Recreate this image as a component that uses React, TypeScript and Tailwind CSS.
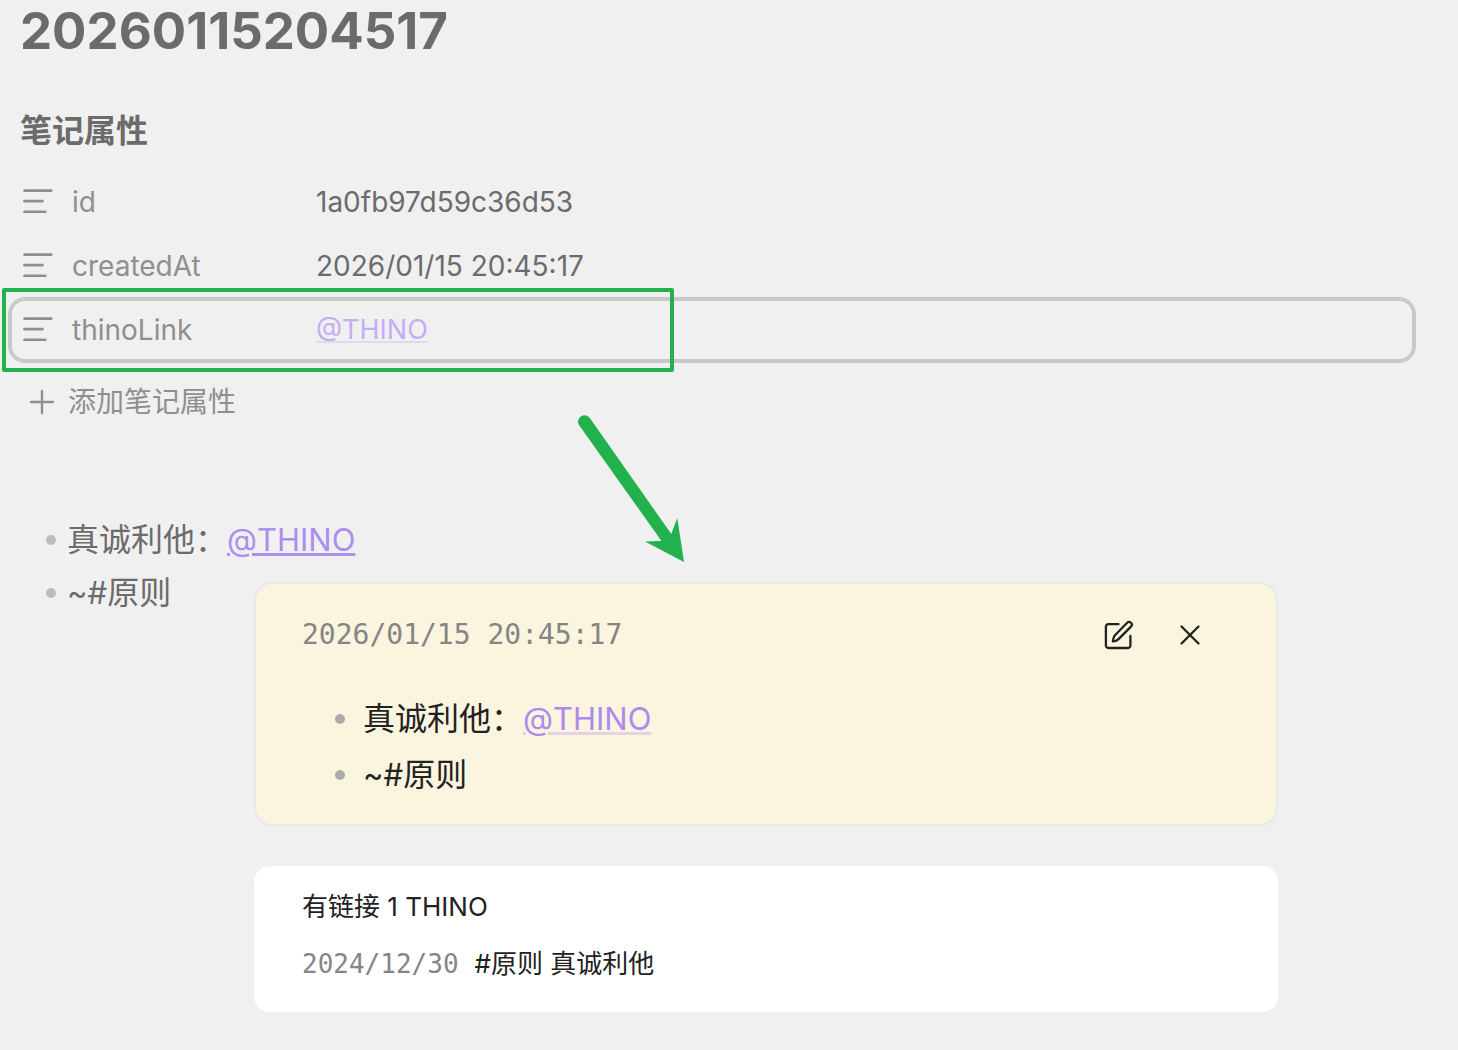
import React from "react";
import { X } from "lucide-react";

const sans = "font-['Inter','Noto_Sans_CJK_SC',sans-serif]";
const mono = "font-['DejaVu_Sans_Mono','Noto_Sans_CJK_SC',monospace]";

function TextIcon() {
  return (
    <svg
      className="size-8 shrink-0"
      viewBox="0 0 32 32"
      fill="none"
      stroke="currentColor"
      strokeWidth="2.6"
      strokeLinecap="round"
      aria-hidden="true"
    >
      <path d="M3.400 4.600H30.400M3.400 15.100H21.500M3.400 25.700H24.300" />
    </svg>
  );
}

function PlusIcon() {
  return (
    <svg
      className="size-7"
      viewBox="0 0 28 28"
      fill="none"
      stroke="currentColor"
      strokeWidth="2.4"
      strokeLinecap="round"
      aria-hidden="true"
    >
      <path d="M14 3V25M3 14H25" />
    </svg>
  );
}

function EditIcon() {
  return (
    <svg
      className="size-8"
      viewBox="8 7 32 32"
      fill="none"
      stroke="currentColor"
      strokeWidth="2.3"
      strokeLinecap="round"
      strokeLinejoin="round"
      aria-hidden="true"
    >
      <path d="M24.500 12.200H14.300A2.400 2.400 0 0 0 11.900 14.600V33.600A2.400 2.400 0 0 0 14.300 36H34A2.400 2.400 0 0 0 36.400 33.600V24" />
      <path d="M33.200 10.800A2.600 2.600 0 0 1 37 14.600L24.500 27.100Q23.300 28.300 21.700 28.800L18.900 29.400L19.500 26.200Q19.900 24.300 21.200 23Z" />
    </svg>
  );
}

function Arrow() {
  return (
    <svg
      className="absolute left-[560px] top-[400px] h-[180px] w-[140px]"
      viewBox="0 0 140 180"
      fill="#22b14c"
      aria-hidden="true"
    >
      <path d="M30 18.3A5.8 5.8 0 0 0 19 25L101.500 141L85 141.500L124 162L117.300 118L111.300 134Z" />
    </svg>
  );
}

function Bullet({ tone }: { tone: string }) {
  return <span className={`size-[10px] shrink-0 rounded-full ${tone}`} />;
}

function PropertyInput({ name, value }: { name: string; value: string }) {
  return (
    <div className="flex h-16 items-center pl-3">
      <label htmlFor={name} className="flex w-[295px] shrink-0 items-center gap-[19px] text-[#8f8f8f]">
        <TextIcon />
        {name}
      </label>
      <input
        id={name}
        type="text"
        defaultValue={value}
        className="min-w-0 flex-1 bg-transparent text-[#6b6b6b] outline-none"
      />
    </div>
  );
}

export default function App() {
  return (
    <div className={`relative min-h-screen overflow-hidden bg-[#f0f0f0] text-[28px] leading-8 ${sans}`}>
      <h1 className="px-5 text-[51px] font-bold leading-[62px] text-[#6b6b6b]">20260115204517</h1>

      <section className="ml-[9px] mr-[43px] mt-[46px]">
        <h2 className="px-[11px] text-[32px] font-semibold leading-[46px] text-[#6b6b6b]">笔记属性</h2>
        <div className="mt-4">
          <PropertyInput name="id" value="1a0fb97d59c36d53" />
          <PropertyInput name="createdAt" value="2026/01/15 20:45:17" />
          <div className="relative flex h-16 items-center rounded-2xl border-[3px] border-[#c8c8c8] pl-[9px] ring-1 ring-[#c8c8c8]">
            <span className="flex w-[295px] shrink-0 items-center gap-[19px] text-[#8f8f8f]">
              <TextIcon />
              thinoLink
            </span>
            <a
              href="#thino"
              className="text-[27px] text-[#c4adf2] underline decoration-[#dfdaee] decoration-2 underline-offset-2"
            >
              @THINO
            </a>
            <span className="pointer-events-none absolute -left-[10px] -top-[13px] h-[84px] w-[672px] rounded-xs border-4 border-[#22b14c]" />
          </div>
        </div>
        <button type="button" className="ml-[19px] mt-6 flex items-center gap-3 text-[#8f8f8f]">
          <PlusIcon />
          添加笔记属性
        </button>
      </section>

      <ul className="mt-[95px] pl-[46px] text-[32px] leading-[53px] text-[#6b6b6b]">
        <li className="flex items-center gap-[11px]">
          <Bullet tone="bg-[#bdbdbd]" />
          <p>
            真诚利他：
            <a
              href="#thino"
              className="text-[31px] text-[#ac8eee] underline decoration-[3px] underline-offset-2"
            >
              @THINO
            </a>
          </p>
        </li>
        <li className="flex items-center gap-[11px]">
          <Bullet tone="bg-[#bdbdbd]" />
          <p>
            <span className="text-[31px]">~#</span>原则
          </p>
        </li>
      </ul>

      <Arrow />

      <aside className="absolute left-[254px] right-[180px] top-[582px] flex flex-col gap-10">
        <article className="rounded-[18px] border-2 border-[#e9e9e9] bg-[#fbf4df] px-[46px] pb-[21px] pt-[31px]">
          <header className="flex items-center justify-between">
            <time className={`leading-10 text-[#858585] ${mono}`}>2026/01/15 20:45:17</time>
            <div className="mr-[23px] flex items-center gap-[39px] text-[#222222]">
              <button type="button" aria-label="编辑">
                <EditIcon />
              </button>
              <button type="button" aria-label="关闭">
                <X className="size-[34px]" strokeWidth={1.6} />
              </button>
            </div>
          </header>
          <ul className="mt-9 pl-[33px] text-[32px] leading-[56px] text-[#222222]">
            <li className="flex items-center gap-[18px]">
              <Bullet tone="bg-[#ababab]" />
              <p>
                真诚利他：
                <a
                  href="#thino"
                  className="text-[31px] text-[#ac8aee] underline decoration-[#e3d1e4] decoration-[3px] underline-offset-2"
                >
                  @THINO
                </a>
              </p>
            </li>
            <li className="flex items-center gap-[18px]">
              <Bullet tone="bg-[#ababab]" />
              <p>
                <span className="text-[31px]">~#</span>原则
              </p>
            </li>
          </ul>
        </article>

        <section className="rounded-2xl bg-white px-12 pb-7 pt-5 text-[26px] text-[#222222]">
          <h3 className="leading-[42px]">有链接 1 THINO</h3>
          <p className="mt-4 flex items-baseline gap-4 leading-10">
            <time className={`text-[#858585] ${mono}`}>2024/12/30</time>
            <span>#原则 真诚利他</span>
          </p>
        </section>
      </aside>
    </div>
  );
}
